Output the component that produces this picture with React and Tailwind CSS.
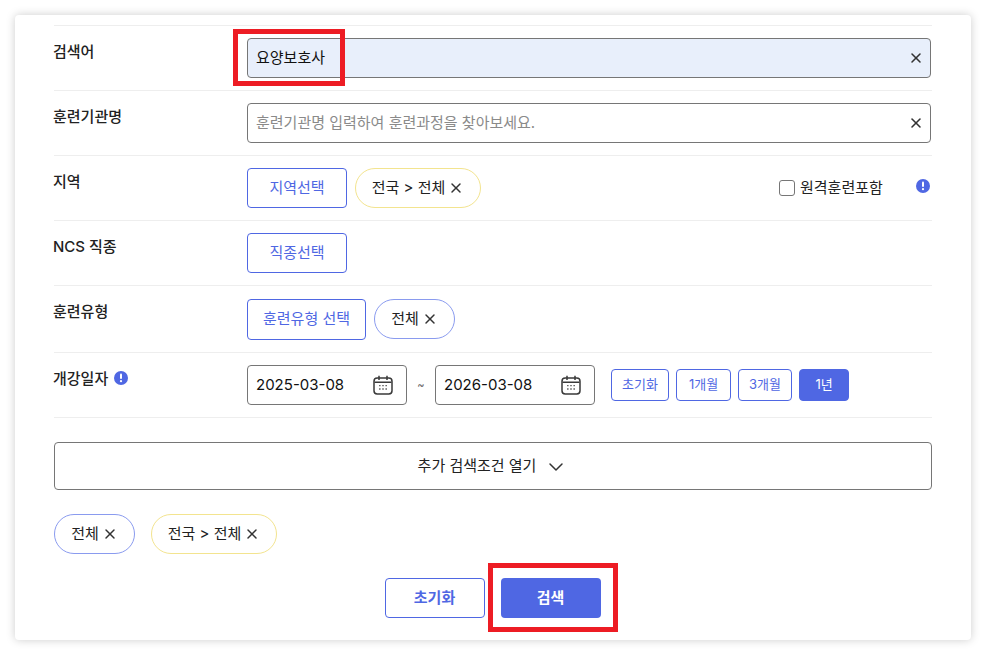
import React from 'react';
import { X, ChevronDown } from 'lucide-react';

const Info = ({ className }) => (
    <span className={`flex h-[14px] w-[14px] items-center justify-center rounded-full bg-[#4f67e3] ${className || ''}`}>
        <svg width="4" height="10" viewBox="0 0 4 10">
            <rect x="1" y="0.5" width="2" height="5.5" rx="1" fill="#fff" />
            <circle cx="2" cy="8.2" r="1.1" fill="#fff" />
        </svg>
    </span>
);

const CalendarIcon = () => (
    <svg width="20" height="20" viewBox="0 0 20 20" fill="none" stroke="#3a3a3a" strokeWidth="1.5">
        <rect x="1" y="3" width="18" height="16" rx="3.2" />
        <path d="M1.5 7.3H18.5M6 0.8V5M14 0.8V5" />
        <path d="M6 10.7h1.6M9.2 10.7h1.6M12.4 10.7h1.6M6 14h1.6M9.2 14h1.6M12.4 14h1.6" strokeWidth="1.3" stroke="#666" />
    </svg>
);

const Row = ({ label, info, h = 'h-[65px]', children }) => (
    <div className={`flex border-b border-[#eeeeee] ${h}`}>
        <div className="-ml-px flex w-[194px] shrink-0 items-start gap-[6px] pt-[15px] text-[15px] leading-[22px] font-medium text-[#222]">
            {label}
            {info && <Info className="mt-[3px]" />}
        </div>
        <div className="flex min-w-0 flex-1 items-start pt-[12px]">{children}</div>
    </div>
);

const TextField = ({ value, placeholder, filled }) => (
    <div className={`flex h-10 w-[684px] items-center justify-between rounded-[4px] border border-[#767676] pr-[6px] pl-2 ${filled ? 'bg-[#e8effb]' : 'bg-white'}`}>
        <span className={`pt-px text-[15px] ${value ? 'text-[#111]' : 'text-[#8a8a8a]'}`}>{value || placeholder}</span>
        <X size={16} strokeWidth={2.3} className="text-[#333]" />
    </div>
);

const OutlineButton = ({ children, w }) => (
    <button type="button" className={`flex h-10 items-center justify-center rounded-[4px] border border-[#4f67e3] bg-white text-[15px] text-[#4f67e3] ${w}`}>
        {children}
    </button>
);

const Chip = ({ children, color, w }) => (
    <span className={`flex h-10 items-center justify-center gap-[3px] rounded-full border bg-white text-[15px] text-[#222] ${color} ${w}`}>
        {children}
        <X size={16} strokeWidth={2.2} className="text-[#333]" />
    </span>
);

const DateField = ({ value }) => (
    <div className="flex h-10 w-40 items-center justify-between rounded-[4px] border border-[#767676] bg-white pr-[13px] pl-2">
        <span className="pt-px text-[15px] text-[#111]">{value}</span>
        <CalendarIcon />
    </div>
);

const SmallButton = ({ children, w, active }) => (
    <button type="button" className={`flex h-8 items-center justify-center rounded-[4px] border border-[#4f67e3] text-[13px] ${w} ${active ? 'bg-[#4f67e3] text-white' : 'bg-white text-[#4f67e3]'}`}>
        {children}
    </button>
);

export default function App() {
    return (
        <div className="relative h-[655px] w-[986px] overflow-hidden bg-white pt-[15px] pl-[15px] font-['Inter','Noto_Sans_CJK_KR',sans-serif]">
            <div className="h-[625px] w-[956px] rounded-[4px] bg-white pt-[10px] pl-[39px] shadow-[0_0_10px_rgba(0,0,0,0.2)]">
                <div className="w-[878px]">
                    <div className="border-t border-[#eeeeee]">
                        <Row label="검색어">
                            <TextField value="요양보호사" filled />
                        </Row>
                        <Row label="훈련기관명">
                            <TextField placeholder="훈련기관명 입력하여 훈련과정을 찾아보세요." />
                        </Row>
                        <Row label="지역">
                            <OutlineButton w="w-[100px]">지역선택</OutlineButton>
                            <div className="ml-2">
                                <Chip color="border-[#f3e48f]" w="w-[126px]">전국 &gt; 전체</Chip>
                            </div>
                            <label className="ml-[298px] flex h-10 items-center gap-[5px] text-[15px] text-[#222]">
                                <span className="h-4 w-4 rounded-[3px] border border-[#767676] bg-white" />
                                원격훈련포함
                            </label>
                            <Info className="mt-[11px] ml-[33px]" />
                        </Row>
                        <Row label="NCS 직종">
                            <OutlineButton w="w-[100px]">직종선택</OutlineButton>
                        </Row>
                        <Row label="훈련유형" h="h-[67px]">
                            <div className="flex items-start gap-2 pt-px">
                                <OutlineButton w="w-[119px] h-[41px]">훈련유형 선택</OutlineButton>
                                <Chip color="border-[#8a9bef]" w="w-[81px]">전체</Chip>
                            </div>
                        </Row>
                        <Row label="개강일자" info>
                            <DateField value="2025-03-08" />
                            <span className="flex h-10 w-7 items-center justify-center text-[11px] text-[#666]">~</span>
                            <DateField value="2026-03-08" />
                            <div className="ml-4 flex gap-[7px] pt-1">
                                <SmallButton w="w-[58px]">초기화</SmallButton>
                                <SmallButton w="w-[55px]">1개월</SmallButton>
                                <SmallButton w="w-[54px]">3개월</SmallButton>
                                <SmallButton w="w-[50px]" active>1년</SmallButton>
                            </div>
                        </Row>
                    </div>

                    <button type="button" className="mt-6 flex h-12 w-full items-center justify-center gap-2 rounded-[4px] border border-[#767676] bg-white pt-px text-[15px] text-[#222]">
                        추가 검색조건 열기
                        <ChevronDown size={24} strokeWidth={1.5} className="text-[#333]" />
                    </button>

                    <div className="mt-6 flex gap-4">
                        <Chip color="border-[#8a9bef]" w="w-[81px]">전체</Chip>
                        <Chip color="border-[#f3e48f]" w="w-[126px]">전국 &gt; 전체</Chip>
                    </div>

                    <div className="mt-6 flex justify-center gap-4 pr-[1px]">
                        <button type="button" className="h-10 w-[100px] rounded-[4px] border border-[#4f67e3] bg-white text-[15px] font-bold text-[#4f67e3]">초기화</button>
                        <button type="button" className="h-10 w-[100px] rounded-[4px] bg-[#4f67e3] text-[15px] font-bold text-white">검색</button>
                    </div>
                </div>
            </div>

            {/* red annotation boxes drawn over the screenshot */}
            <div className="absolute top-[29px] left-[233px] h-[57px] w-[112px] border-[5px] border-[#ed1c24]" />
            <div className="absolute top-[563px] left-[488px] h-[69px] w-[130px] border-[5px] border-[#ed1c24]" />
        </div>
    );
}
